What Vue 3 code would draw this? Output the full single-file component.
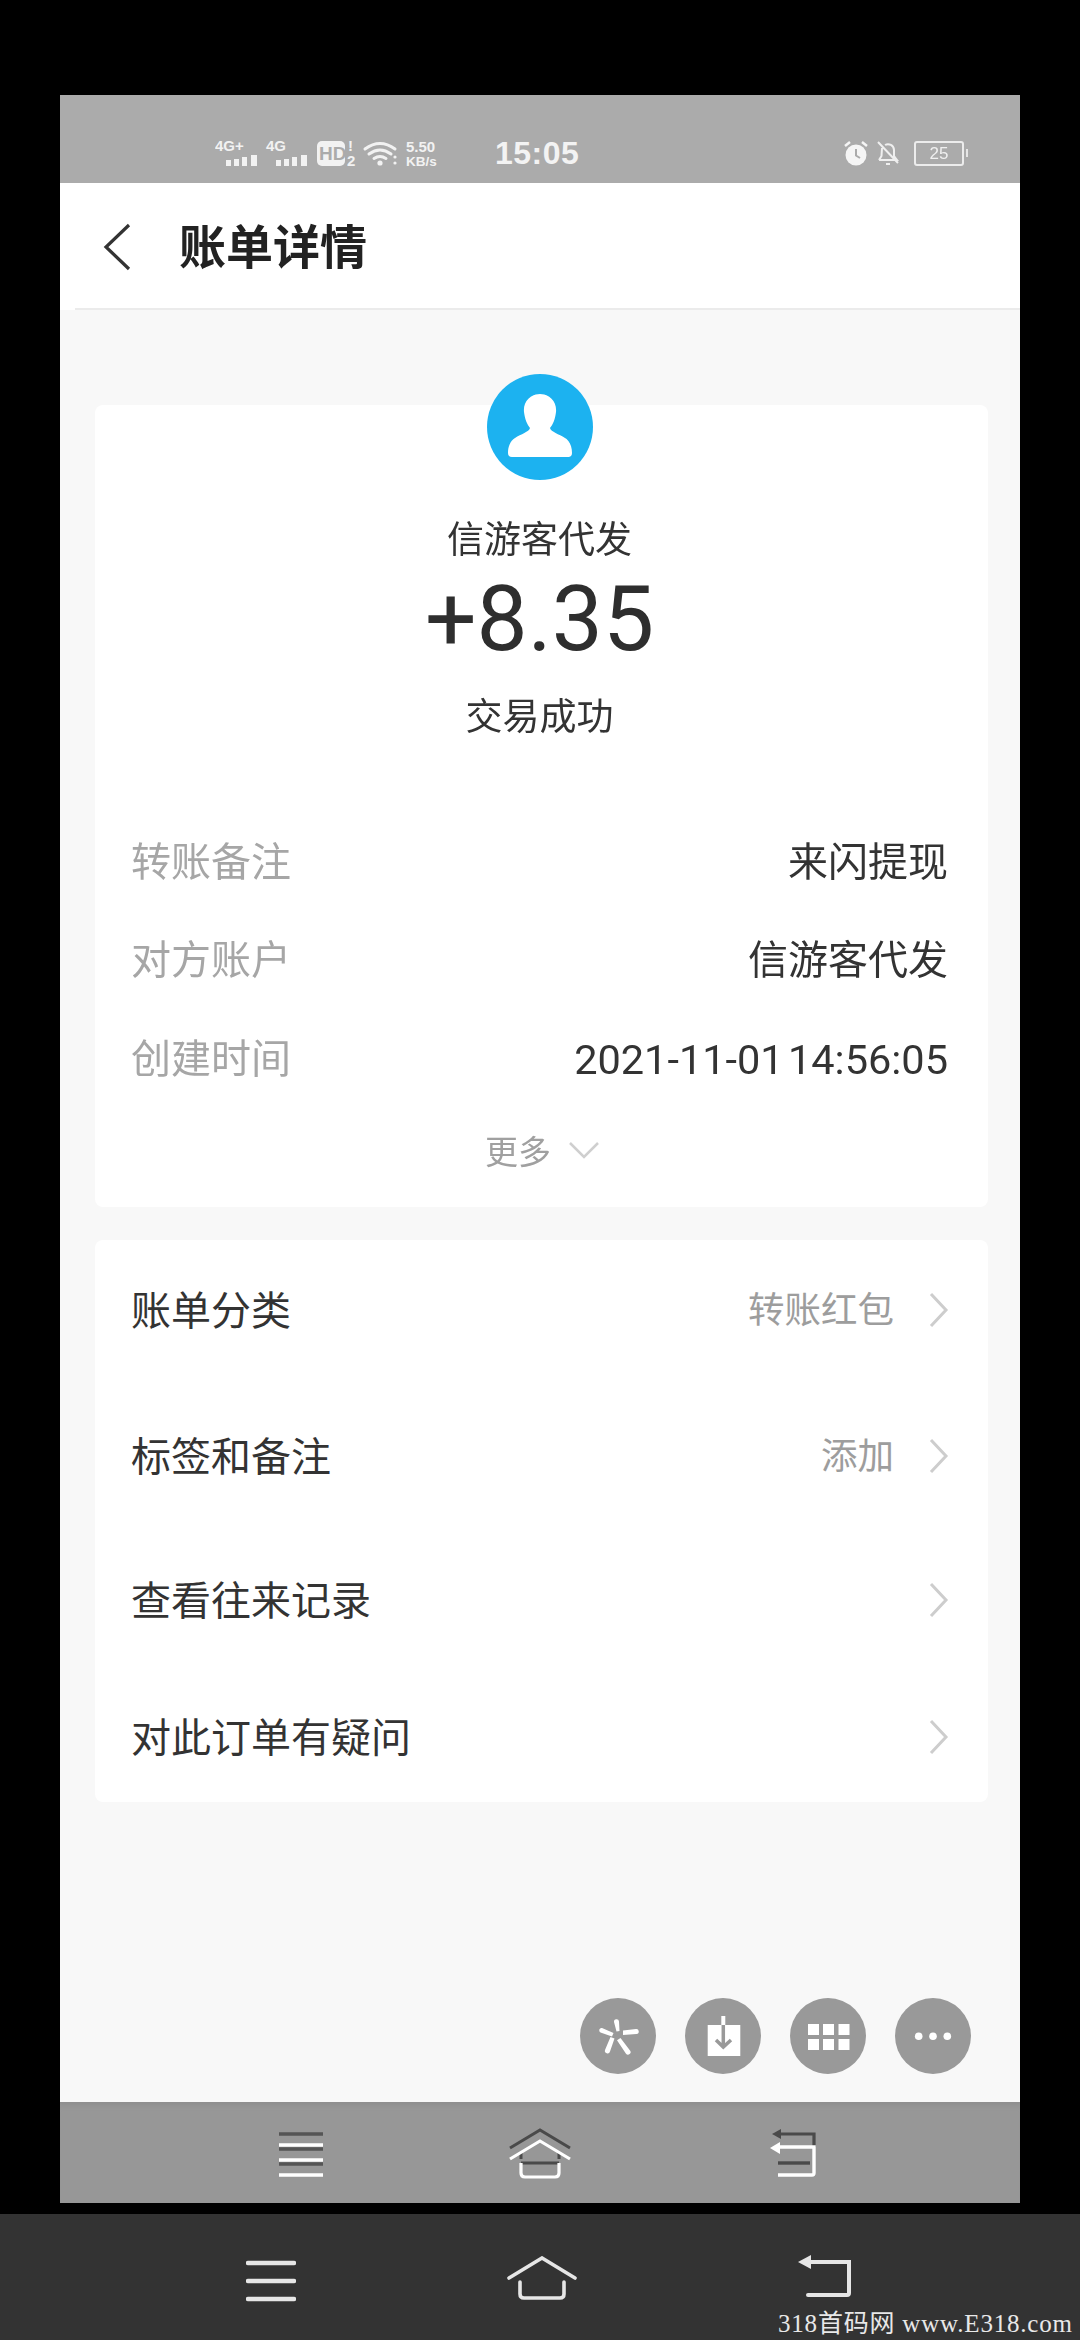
<script setup>
const infoRows = [
  { label: '转账备注', value: '来闪提现' },
  { label: '对方账户', value: '信游客代发' },
  { label: '创建时间', value: '2021-11-01 14:56:05' }
]
const linkRows = [
  { label: '账单分类', value: '转账红包' },
  { label: '标签和备注', value: '添加' },
  { label: '查看往来记录', value: '' },
  { label: '对此订单有疑问', value: '' }
]
</script>

<template>
  <div class="screen">
    <div class="phone">
      <div class="status">
        <svg class="status-left" width="226" height="34" viewBox="0 -4 226 34">
          <g fill="#f2f2f2">
            <text x="0" y="11" class="tiny">4G+</text>
            <rect x="11" y="20" width="5" height="6" /><rect x="19" y="19" width="5" height="7" /><rect x="27" y="17" width="5" height="9" /><rect x="36" y="15" width="6" height="11" />
            <text x="51" y="11" class="tiny">4G</text>
            <rect x="61" y="20" width="5" height="6" /><rect x="69" y="19" width="5" height="7" /><rect x="77" y="17" width="5" height="9" /><rect x="86" y="15" width="6" height="11" />
            <rect x="102" y="1" width="28" height="25" rx="5" />
            <text x="133" y="11" class="tiny">!</text>
            <text x="132" y="26" class="tiny2">2</text>
            <text x="191" y="12" class="tiny2">5.50</text>
            <text x="191" y="26" class="tiny3">KB/s</text>
            <circle cx="165" cy="23" r="2.6" />
            <circle cx="180" cy="17" r="1.6" /><circle cx="180" cy="23" r="1.6" />
          </g>
          <text x="104" y="20" class="hd">HD</text>
          <g fill="none" stroke="#f2f2f2" stroke-width="3" stroke-linecap="round">
            <path d="M150 9 Q165 -2 180 9" />
            <path d="M154 14 Q165 6 176 14" />
            <path d="M159 18.5 Q165 14.5 171 18.5" />
          </g>
        </svg>
        <span class="time">15:05</span>
        <div class="status-right">
          <svg width="26" height="26" viewBox="0 0 26 26">
            <circle cx="13" cy="15" r="10.5" fill="#f5f5f5" />
            <path d="M13 9v6.5l4 2.5" fill="none" stroke="#ababab" stroke-width="2" />
            <path d="M2 6l5-4M24 6l-5-4" stroke="#f5f5f5" stroke-width="2.5" fill="none" />
          </svg>
          <svg class="bell" width="24" height="26" viewBox="0 0 24 26">
            <path d="M3 20h18l-3-4V10a6 6 0 0 0-9-5M6 8l-.5 8L3 20M10 24h4M2 2l20 21" fill="none" stroke="#efefef" stroke-width="2" />
          </svg>
          <div class="battery">25</div>
          <span class="nub"></span>
        </div>
      </div>

      <header class="topbar">
        <svg class="back" width="30" height="48" viewBox="0 0 30 48">
          <path d="M26 2 3 24l23 22" fill="none" stroke="#333" stroke-width="3.2" />
        </svg>
        <h1 class="title">账单详情</h1>
      </header>

      <main class="page">
        <section class="card summary">
          <div class="avatar">
            <svg width="106" height="106" viewBox="0 0 106 106">
              <circle cx="53" cy="53" r="53" fill="#1cb2f0" />
              <path d="M53 20C43 20 36 28 37 38C38 46 40 50 43 54C42 58 34 60 28 64C23 67 21 73 21 79Q21 83 25 83H81Q85 83 85 79C85 73 83 67 78 64C72 60 64 58 63 54C66 50 68 46 69 38C70 28 63 20 53 20Z" fill="#fff" />
            </svg>
          </div>
          <div class="name">信游客代发</div>
          <div class="amount">+8.35</div>
          <div class="state">交易成功</div>
          <div class="info-list">
            <div v-for="row in infoRows" :key="row.label" class="info-row">
              <span class="info-label">{{ row.label }}</span>
              <span class="info-value">{{ row.value }}</span>
            </div>
          </div>
          <div class="more">
            <span>更多</span>
            <svg width="32" height="18" viewBox="0 0 32 18">
              <path d="M2 2l14 14L30 2" fill="none" stroke="#cfcfcf" stroke-width="2.5" />
            </svg>
          </div>
        </section>

        <section class="card links">
          <div v-for="row in linkRows" :key="row.label" class="link-row">
            <span class="link-label">{{ row.label }}</span>
            <span class="link-value">{{ row.value }}</span>
            <svg class="chev" width="20" height="36" viewBox="0 0 20 36">
              <path d="M2 2l15 16L2 34" fill="none" stroke="#cdcdcd" stroke-width="3" />
            </svg>
          </div>
        </section>

        <div class="actions">
          <button class="round">
            <svg width="76" height="76" viewBox="0 0 76 76" fill="#fff">
              <path d="M34 24a2.500 2.500 0 0 1 5-.5L39.500 33l-3 .5z" />
              <path d="M43 32.500 56 31a2.500 2.500 0 0 1 .5 5L43 37z" />
              <path d="M22 30 33.500 35l-1.500 3.500-11.500-4a2.400 2.400 0 0 1 1.500-4.500z" />
              <path d="M30.500 39l4 1.500-4.500 13a2.500 2.500 0 0 1-5-1.500z" />
              <path d="M40.500 40l9.500 12.500a2.500 2.500 0 0 1-4 3.200l-9-13.500z" />
            </svg>
          </button>
          <button class="round">
            <svg width="76" height="76" viewBox="0 0 76 76">
              <rect x="22.700" y="27" width="32.600" height="31" fill="#fff" />
              <path d="M38.300 18v9" stroke="#fff" stroke-width="4" />
              <path d="M38.300 27v21M31 42l7.300 7 7.700-7" stroke="#999" stroke-width="3.500" fill="none" />
            </svg>
          </button>
          <button class="round">
            <svg width="76" height="76" viewBox="0 0 76 76" fill="#fff">
              <rect x="18" y="26" width="11" height="11" /><rect x="33" y="26" width="11" height="11" /><rect x="48.500" y="26" width="11" height="11" />
              <rect x="18" y="41" width="11" height="11" /><rect x="33" y="41" width="11" height="11" /><rect x="48.500" y="41" width="11" height="11" />
            </svg>
          </button>
          <button class="round">
            <svg width="76" height="76" viewBox="0 0 76 76" fill="#fff">
              <circle cx="23.700" cy="38.300" r="3.800" /><circle cx="38" cy="38.300" r="3.800" /><circle cx="52.300" cy="38.300" r="3.800" />
            </svg>
          </button>
        </div>
      </main>

      <nav class="softnav">
        <svg width="44" height="52" viewBox="0 0 44 52">
          <path d="M0 6h44M0 21h44M0 36h44" stroke="#555" stroke-width="3.500" />
          <path d="M0 17h44M0 32h44M0 47h44" stroke="#fff" stroke-width="3.500" />
        </svg>
        <svg class="soft-home" width="64" height="52" viewBox="0 0 64 52">
          <path d="M2 20 32 2l30 18M13 24v7M51 24v7M13 35h38" fill="none" stroke="#4a4a4a" stroke-width="3" />
          <path d="M2 31 32 13l30 18M13 35v10q0 4 4 4h30q4 0 4-4V35" fill="none" stroke="#fff" stroke-width="3.200" />
        </svg>
        <svg class="soft-back" width="46" height="52" viewBox="0 0 46 52">
          <path d="M10 6h34v13" fill="none" stroke="#4a4a4a" stroke-width="3.200" />
          <path d="M2 6l9-5v10z" fill="#4a4a4a" />
          <path d="M8 19h36v26q0 2-2 2H8" fill="none" stroke="#fff" stroke-width="3.400" />
          <path d="M0 20l10-6v12z" fill="#fff" />
          <path d="M8 35h32" stroke="#4a4a4a" stroke-width="3.400" />
        </svg>
      </nav>
    </div>

    <footer class="sysbar">
      <svg class="sys-menu" width="50" height="42" viewBox="0 0 50 42">
        <path d="M2 3h46M2 21h46M2 39h46" stroke="#e6e6e6" stroke-width="4.500" stroke-linecap="round" />
      </svg>
      <svg class="sys-home" width="70" height="44" viewBox="0 0 70 44">
        <path d="M2 22 35 2l33 20M13 26v12q0 4 4 4h36q4 0 4-4V26" fill="none" stroke="#e6e6e6" stroke-width="3.600" stroke-linecap="round" />
      </svg>
      <svg class="sys-back" width="54" height="44" viewBox="0 0 54 44">
        <path d="M10 8h41v31q0 2-2 2H10" fill="none" stroke="#e6e6e6" stroke-width="4" stroke-linecap="round" />
        <path d="M0 8l13-7v14z" fill="#e6e6e6" />
      </svg>
      <span class="watermark">318首码网 www.E318.com</span>
    </footer>
  </div>
</template>

<style>
html, body { margin: 0; background: #000; }
</style>

<style scoped>
.screen {
  width: 1080px;
  height: 2340px;
  background: #000;
  display: flex;
  flex-direction: column;
  align-items: stretch;
  overflow: hidden;
  font-family: "Noto Sans CJK SC", "Noto Sans", sans-serif;
}
.phone {
  width: 960px;
  height: 2108px;
  margin: 95px 0 0 60px;
  display: flex;
  flex-direction: column;
  filter: blur(0.5px);
}
.status {
  height: 88px;
  box-sizing: border-box;
  padding: 28px 0 0 155px;
  background: #ababab;
  display: flex;
  align-items: center;
  flex: none;
}
.tiny { font: 700 15px "Liberation Sans", sans-serif; }
.tiny2 { font: 700 15px "Liberation Sans", sans-serif; }
.tiny3 { font: 700 13.500px "Liberation Sans", sans-serif; }
.hd { font: 700 19px "Liberation Sans", sans-serif; fill: #ababab; }
.time {
  margin-left: 54px;
  font: 700 32px/1 "Liberation Sans", sans-serif;
  color: #f3f3f3;
  letter-spacing: 0.500px;
}
.status-right {
  margin-left: auto;
  padding-right: 52px;
  display: flex;
  align-items: center;
}
.bell { margin-left: 7px; }
.battery {
  width: 50px;
  height: 25px;
  margin-left: 14px;
  box-sizing: border-box;
  border: 2px solid #ececec;
  border-radius: 3px;
  color: #f0f0f0;
  font: 400 17px/21px "Liberation Sans", sans-serif;
  text-align: center;
}
.nub { width: 2px; height: 8px; margin-left: 2px; background: #e6e6e6; }

.topbar {
  height: 127px;
  flex: none;
  box-sizing: border-box;
  padding-left: 43px;
  background: #fff;
  display: flex;
  align-items: center;
  position: relative;
}
.topbar::after {
  content: "";
  position: absolute;
  left: 15px;
  right: 0;
  bottom: 0;
  height: 2px;
  background: #ebebeb;
}
.title {
  margin: 0 0 0 46px;
  padding-bottom: 5px;
  font-size: 47px;
  font-weight: 700;
  line-height: 60px;
  color: #222;
}

.page {
  flex: 1;
  min-height: 0;
  background: #f8f8f8;
  padding-top: 95px;
  display: flex;
  flex-direction: column;
}
.card {
  margin: 0 32px 0 35px;
  background: #fff;
  box-sizing: border-box;
  border-radius: 8px;
}
.summary {
  height: 802px;
  padding: 0 40px 0 36px;
  display: flex;
  flex-direction: column;
  align-items: center;
}
.avatar { margin-top: -31px; height: 106px; }
.name {
  margin-top: 32px;
  font-size: 37px;
  line-height: 50px;
  color: #333;
}
.amount {
  margin-top: 7px;
  font: 400 91px/100px Roboto, sans-serif;
  color: #2e2e2e;
}
.state {
  margin-top: 20px;
  font-size: 37px;
  line-height: 50px;
  color: #333;
}
.info-list { margin-top: 73px; width: 100%; }
.info-row {
  height: 98.500px;
  display: flex;
  align-items: center;
  justify-content: space-between;
}
.info-label { padding-bottom: 5px; font-size: 40px; color: #a6a6a6; }
.info-value {
  padding-bottom: 5px;
  font: 400 40px "Roboto", "Noto Sans CJK SC", sans-serif;
  color: #333;
}
.info-row:last-child .info-value {
  padding: 2px 0 0;
  font-size: 41.500px;
  word-spacing: -6px;
}
.more {
  margin: 12px 0 0 6px;
  height: 60px;
  display: flex;
  align-items: center;
  gap: 17px;
  font-size: 33px;
  color: #a0a0a0;
}
.links {
  margin-top: 33px;
  padding: 0 39px 0 36px;
}
.link-row {
  height: 140px;
  display: flex;
  align-items: center;
  font-size: 40px;
  color: #333;
}
.link-row:nth-child(2) { height: 152px; }
.link-row:nth-child(3) { height: 136px; }
.link-row:nth-child(4) { height: 134px; padding-top: 4px; box-sizing: border-box; }
.link-label { flex: 1; padding-bottom: 5px; }
.link-value { padding-bottom: 5px; font-size: 36.500px; color: #9d9d9d; }
.chev { margin-left: 35px; flex: none; }

.actions {
  margin-top: auto;
  padding: 0 49px 28px 0;
  display: flex;
  justify-content: flex-end;
  gap: 29px;
}
.round {
  width: 76px;
  height: 76px;
  padding: 0;
  border: 0;
  border-radius: 50%;
  background: #999;
  display: block;
}
.round svg { display: block; }

.softnav {
  height: 101px;
  flex: none;
  background: #979797;
  box-shadow: inset 0 8px 6px -6px #8c8c8c;
  box-sizing: border-box;
  padding: 26px 0 0 219px;
  display: flex;
  align-items: flex-start;
}
.soft-home { margin-left: 185px; }
.soft-back { margin-left: 198px; }

.sysbar {
  margin-top: 11px;
  flex: 1;
  background: #333;
  position: relative;
  display: flex;
  align-items: flex-start;
  padding: 46px 0 0 246px;
}
.sys-home { margin-left: 211px; margin-top: -4px; }
.sys-back { margin-left: 221px; margin-top: -6px; }
.watermark {
  position: absolute;
  left: 778px;
  bottom: 0;
  font: 400 25px/32px "Liberation Serif", "Noto Sans CJK SC", serif;
  color: #e8e8e8;
  letter-spacing: 0.800px;
  white-space: nowrap;
}
</style>
